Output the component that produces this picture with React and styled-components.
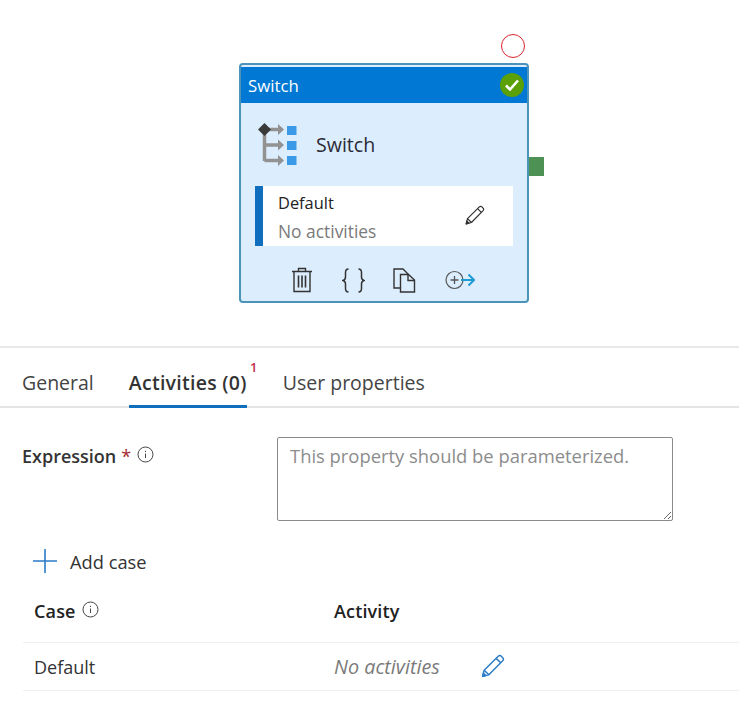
import React from "react"
import styled, { createGlobalStyle } from "styled-components"

const Global = createGlobalStyle`
  html, body { margin: 0; padding: 0; background: #fff; }
  body { font-family: "Open Sans", "Noto Sans", sans-serif; color: #252525; overflow: hidden; }
`

const Page = styled.div`
  width: 739px;
  height: 715px;
  overflow: hidden;
`

const Canvas = styled.div`
  height: 348px;
  padding: 63px 0 0 239px;
  box-sizing: border-box;
  border-bottom: 2px solid #e8e8e8;
`

const Card = styled.div`
  position: relative;
  width: 290px;
  height: 240px;
  box-sizing: border-box;
  border: 2px solid #4b93b8;
  border-radius: 4px;
  background: #dcedfd;
  padding-top: 2px;
`

const StatusRing = styled.div`
  position: absolute;
  top: -31px;
  right: 2px;
  width: 24px;
  height: 24px;
  box-sizing: border-box;
  border: 1.5px solid #d9232e;
  border-radius: 50%;
  background: #fff;
`

const OutputPort = styled.div`
  position: absolute;
  top: 92px;
  right: -17px;
  width: 15px;
  height: 19px;
  background: #4d9155;
`

const CardHeader = styled.div`
  height: 36px;
  background: #0078d4;
  color: #fff;
  font-size: 16.8px;
  display: flex;
  align-items: center;
  justify-content: space-between;
  padding: 0 3px 0 7px;
`

const CheckBadge = styled.div`
  width: 24px;
  height: 24px;
  border-radius: 50%;
  background: #5aa006;
  display: flex;
  align-items: center;
  justify-content: center;
`

const CardTitleRow = styled.div`
  height: 83px;
  display: flex;
  align-items: center;
  padding-left: 17px;
  gap: 18px;
  font-size: 19.6px;
  color: #2b2b35;
`

const CaseBox = styled.div`
  margin-left: 14px;
  width: 258px;
  height: 60px;
  box-sizing: border-box;
  background: #fff;
  border-left: 8px solid #106ebe;
  padding: 5px 0 0 15px;
  display: flex;
  justify-content: space-between;
`

const CaseName = styled.div`
  font-size: 16.4px;
  line-height: 24px;
  color: #222;
`

const CaseSub = styled.div`
  font-size: 17.4px;
  line-height: 24px;
  margin-top: 4px;
  color: #7a7a7a;
`

const CaseEdit = styled.div`
  margin: 14px 28px 0 0;
  height: 24px;
`

const CardActions = styled.div`
  display: flex;
  align-items: center;
  padding: 20px 0 0 51px;
  height: 28px;
`

const ActionSlot = styled.div`
  width: ${p => p.$w}px;
  display: flex;
`

const TabBar = styled.div`
  display: flex;
  height: 60px;
  box-sizing: border-box;
  border-bottom: 2px solid #e4e4e4;
  padding-left: 22px;
`

const Tab = styled.div`
  position: relative;
  margin-right: ${p => p.$gap}px;
  padding-top: 21px;
  font-size: 19.5px;
  line-height: 28px;
  font-weight: ${p => (p.$active ? 600 : 400)};
  letter-spacing: ${p => (p.$active ? "0.28px" : "0")};
  color: ${p => (p.$active ? "#333" : "#444")};
  height: 60px;
  box-sizing: border-box;
  border-bottom: ${p => (p.$active ? "3px solid #106ebe" : "none")};
`

const TabBadge = styled.span`
  position: absolute;
  top: 11px;
  right: -11px;
  font-size: 13px;
  line-height: 16px;
  font-weight: 600;
  color: #c4314b;
`

const FormRow = styled.div`
  display: flex;
  padding: 29px 0 0 22px;
`

const FieldLabel = styled.div`
  width: 255px;
  display: flex;
  align-items: flex-start;
  font-size: 18px;
  line-height: 38px;
  font-weight: 600;
  color: #333;
`

const Star = styled.span`
  color: #a4262c;
  margin: 0 6px 0 5px;
  font-weight: 400;
`

const InfoWrap = styled.span`
  display: inline-flex;
  margin-top: ${p => p.$top}px;
  margin-left: ${p => p.$left || 0}px;
`

const ExpressionInput = styled.textarea`
  width: 396px;
  height: 84px;
  box-sizing: border-box;
  border: 1px solid #8a8a8a;
  border-radius: 2px;
  padding: 3px 12px;
  font-family: inherit;
  font-size: 18.4px;
  line-height: 30px;
  outline: none;
  resize: both;
  &::placeholder { color: #8c8c8c; opacity: 1; }
`

const AddCase = styled.div`
  display: flex;
  align-items: center;
  gap: 13px;
  padding: 24px 0 0 33px;
  height: 32px;
  font-size: 18.3px;
  color: #333;
`

const GridRow = styled.div`
  display: grid;
  grid-template-columns: 300px 1fr;
  align-items: center;
  margin-left: 23px;
  padding: ${p => p.$top || 0}px 0 0 11px;
  height: ${p => p.$h}px;
  box-sizing: border-box;
  border-bottom: 1px solid #efefef;
  font-size: 18px;
`

const HeadCell = styled.div`
  display: flex;
  font-weight: 600;
  color: #222;
  letter-spacing: 0.15px;
`

const ValueCell = styled.div`
  display: flex;
  align-items: center;
  color: #333;
`

const MutedCell = styled.span`
  font-style: italic;
  font-size: 19.8px;
  color: #7a7a7a;
  width: 146px;
`

const Pencil = ({ color, size }) => (
  <svg width={size} height={size} viewBox="0 0 24 24" fill="none" stroke={color} strokeWidth="1.4" strokeLinejoin="round">
    <path d="M2.5 21.5 4 15.5 17.5 2.2c.9-.8 2.2-.8 3 0l1.3 1.3c.8.8.8 2.1 0 3L8.5 20z" />
    <path d="M15.5 4.2 19.8 8.5M4 15.5 8.5 20" />
    <path d="M2.5 21.5 3.3 18.4 5.6 20.7z" fill={color} />
  </svg>
)

const Info = () => (
  <svg width="17" height="17" viewBox="0 0 17 17" fill="none" stroke="#444" strokeWidth="1">
    <circle cx="8.5" cy="8.5" r="7.5" />
    <path d="M8.5 7.5v4.5M8.5 4.8v1.2" />
  </svg>
)

const SwitchIcon = () => (
  <svg width="40" height="44" viewBox="0 0 40 44">
    <path d="M6.500 6v32M6.500 6.500h15M6.500 22h15M6.500 37.500h15" stroke="#929292" strokeWidth="3.500" fill="none" />
    <path d="M20 1 26 6.500 20 12zM20 16.500 26 22 20 27.500zM20 32 26 37.500 20 43z" fill="#929292" />
    <path d="M6.500 0 13 6.500 6.500 13 0 6.500z" fill="#3a3a3a" />
    <rect x="29" y="3" width="9.500" height="9" fill="#3b9ae8" />
    <rect x="29" y="18" width="9.500" height="9" fill="#3b9ae8" />
    <rect x="29" y="33" width="9.500" height="9" fill="#3b9ae8" />
  </svg>
)

const Trash = () => (
  <svg width="20" height="26" viewBox="0 0 20 26" fill="none" stroke="#333" strokeWidth="1.4">
    <path d="M0 4.500h20M6.500 4.500V1.500h7v3" />
    <path d="M2 4.500V24.500h16V4.500" />
    <path d="M6.500 8.500v12M10 8.500v12M13.500 8.500v12" strokeWidth="1.600" />
  </svg>
)

const BracesIcon = () => (
  <svg width="23" height="25" viewBox="0 0 23 25" fill="none" stroke="#333" strokeWidth="1.500">
    <path d="M6.500 1C4 1 3.500 2.500 3.500 4.500v4.500c0 1.800-.8 3-2.500 3.500 1.700.5 2.500 1.700 2.500 3.500v4.500c0 2 .5 3.500 3 3.500" />
    <path d="M16.500 1c2.500 0 3 1.500 3 3.500v4.500c0 1.800.8 3 2.500 3.500-1.700.5-2.500 1.700-2.500 3.500v4.500c0 2-.5 3.500-3 3.500" />
  </svg>
)

const Copy = () => (
  <svg width="23" height="25" viewBox="0 0 23 25" fill="#dcedfd" stroke="#333" strokeWidth="1.4">
    <path d="M1 1h9l5 5v14H1z" />
    <path d="M7.500 6.500h8l6 5.500v12h-14z" />
    <path d="M15 6.500v6h6.500" fill="none" />
  </svg>
)

const AddOutput = () => (
  <svg width="30" height="20" viewBox="0 0 30 20" fill="none">
    <circle cx="9.500" cy="10" r="8.500" stroke="#555" strokeWidth="1.200" />
    <path d="M5.500 10h8M9.500 6v8" stroke="#555" strokeWidth="1.300" />
    <path d="M16 10h13M23.500 4.500 29 10l-5.500 5.500" stroke="#1e9bd1" strokeWidth="2" />
  </svg>
)

const Plus = () => (
  <svg width="24" height="24" viewBox="0 0 24 24" stroke="#2b7cc7" strokeWidth="1.600">
    <path d="M0 12h24M12 0v24" />
  </svg>
)

export default function App() {
  return (
    <Page>
      <Global />
      <Canvas>
        <Card>
          <StatusRing />
          <OutputPort />
          <CardHeader>
            Switch
            <CheckBadge>
              <svg width="14" height="12" viewBox="0 0 14 12" fill="none" stroke="#fff" strokeWidth="2.600">
                <path d="M1 6.500 5 10.500 13 1.500" />
              </svg>
            </CheckBadge>
          </CardHeader>
          <CardTitleRow>
            <SwitchIcon />
            Switch
          </CardTitleRow>
          <CaseBox>
            <div>
              <CaseName>Default</CaseName>
              <CaseSub>No activities</CaseSub>
            </div>
            <CaseEdit>
              <Pencil color="#333" size={21} />
            </CaseEdit>
          </CaseBox>
          <CardActions>
            <ActionSlot $w={50}><Trash /></ActionSlot>
            <ActionSlot $w={51}><BracesIcon /></ActionSlot>
            <ActionSlot $w={52}><Copy /></ActionSlot>
            <ActionSlot $w={40}><AddOutput /></ActionSlot>
          </CardActions>
        </Card>
      </Canvas>
      <TabBar>
        <Tab $gap={35}>General</Tab>
        <Tab $gap={36} $active>
          Activities (0)
          <TabBadge>1</TabBadge>
        </Tab>
        <Tab $gap={0}>User properties</Tab>
      </TabBar>
      <FormRow>
        <FieldLabel>
          Expression
          <Star>*</Star>
          <InfoWrap $top={9}><Info /></InfoWrap>
        </FieldLabel>
        <ExpressionInput placeholder="This property should be parameterized." />
      </FormRow>
      <AddCase>
        <Plus />
        Add case
      </AddCase>
      <GridRow $h={66} $top={3}>
        <HeadCell>
          Case
          <InfoWrap $top={2} $left={6}><Info /></InfoWrap>
        </HeadCell>
        <HeadCell>Activity</HeadCell>
      </GridRow>
      <GridRow $h={48}>
        <ValueCell>Default</ValueCell>
        <ValueCell>
          <MutedCell>No activities</MutedCell>
          <Pencil color="#2b7cc7" size={25} />
        </ValueCell>
      </GridRow>
    </Page>
  )
}
